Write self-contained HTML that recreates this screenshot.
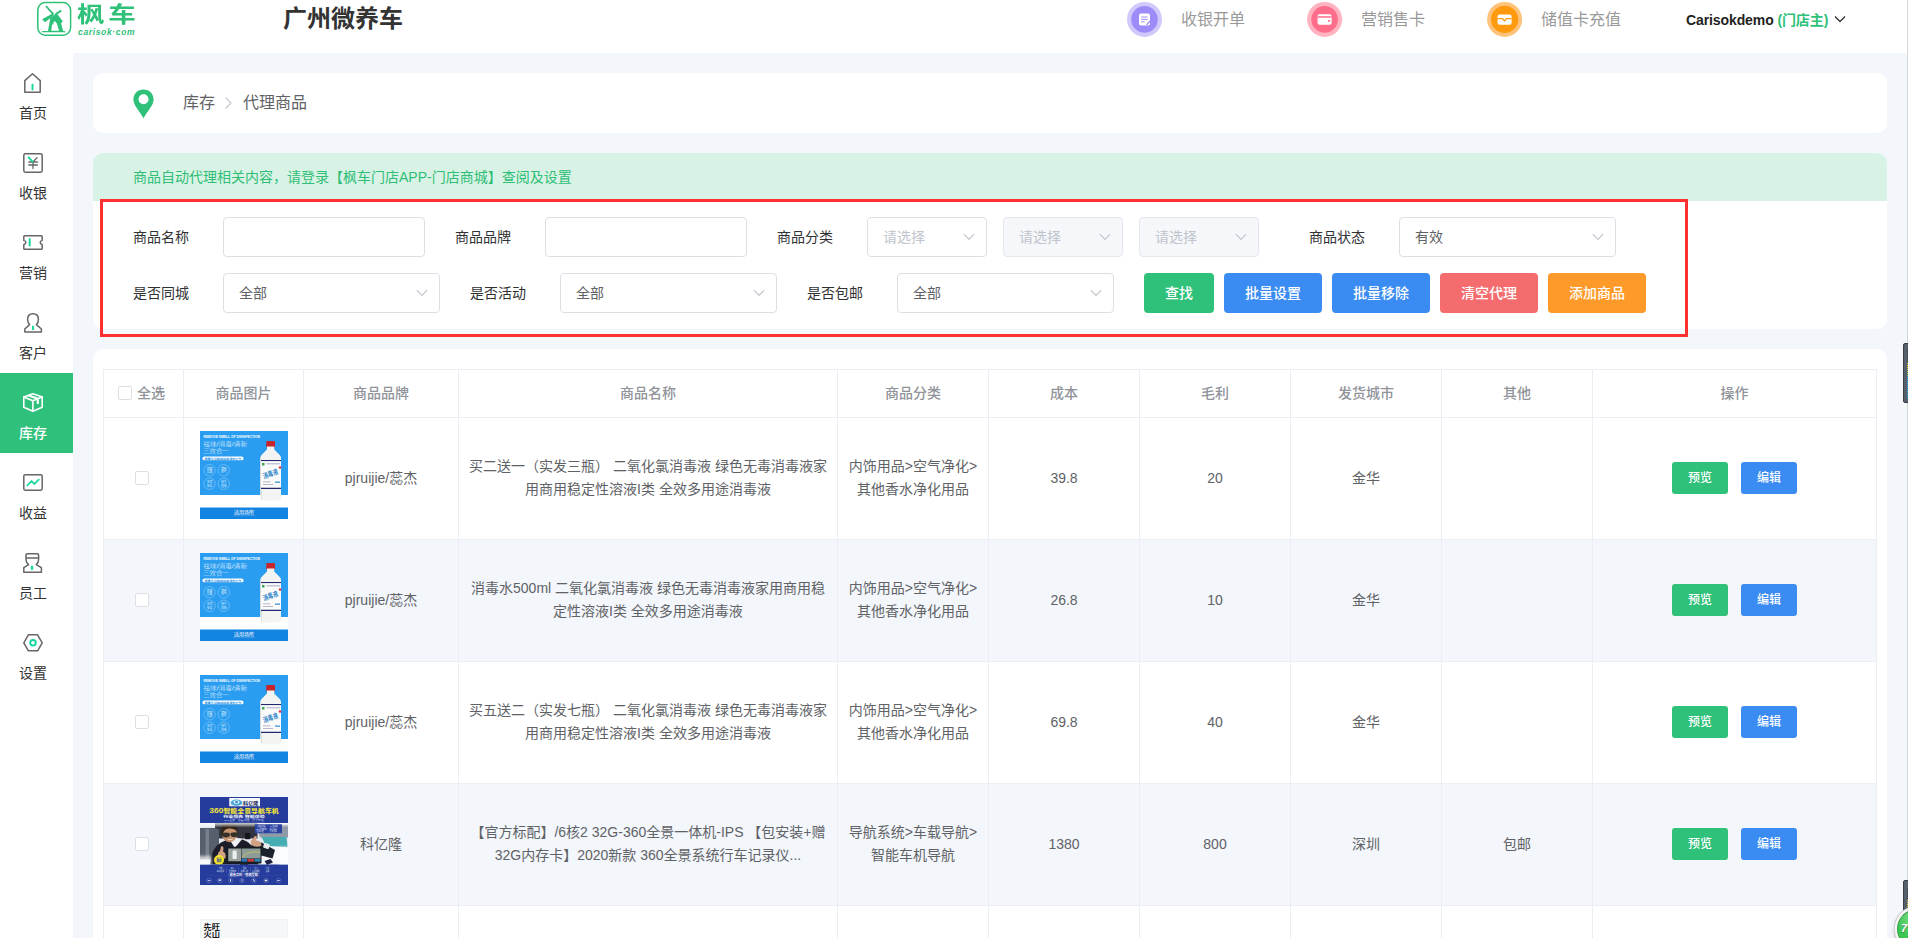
<!DOCTYPE html>
<html lang="zh-CN">
<head>
<meta charset="utf-8">
<title>代理商品</title>
<style>
*{box-sizing:border-box;margin:0;padding:0}
html,body{width:1908px;height:938px;overflow:hidden;background:#fff}
body{position:relative;font-family:"Liberation Sans","Noto Sans CJK SC",sans-serif;font-size:14px;color:#333;-webkit-font-smoothing:antialiased}
.abs{position:absolute}
/* header */
#hdr{position:absolute;left:0;top:0;width:1907px;height:53px;background:#fff}
#logo-t{position:absolute;left:77px;top:-2px;font-size:22px;font-weight:700;color:#2fc079;letter-spacing:3px;line-height:34px;white-space:nowrap;transform:scaleX(1.25);transform-origin:0 0}
#logo-s{position:absolute;left:78px;top:25px;font-size:8.5px;font-style:italic;color:#2fc079;letter-spacing:0.65px;line-height:14px;white-space:nowrap;font-weight:bold}
#title{position:absolute;left:283px;top:2px;font-size:24px;font-weight:bold;color:#333;line-height:34px;white-space:nowrap}
.hl{position:absolute;top:10px;font-size:16px;line-height:20px;color:#999;white-space:nowrap}
#user{position:absolute;left:1686px;top:10.5px;font-size:14px;line-height:18px;font-weight:bold;color:#222;white-space:nowrap;letter-spacing:-0.1px}
#user span{color:#2fc079}
/* sidebar */
#side{position:absolute;left:0;top:53px;width:73px;height:885px;background:#fff}
.si{position:absolute;left:0;width:73px;height:80px}
.si b{position:absolute;left:0;width:66px;top:50px;text-align:center;font-size:14px;line-height:20px;font-weight:normal;color:#333}
.si.on{background:#2fc17b}
.si.on b{color:#fff;font-weight:500}
/* main */
#main{position:absolute;left:73px;top:53px;width:1834px;height:885px;background:#f3f6fb}
.card{position:absolute;background:#fff;border-radius:10px}

/* breadcrumb */
#bc{left:20px;top:20px;width:1794px;height:60px}
#bc .t{position:absolute;top:20px;font-size:16px;line-height:20px;color:#606266;white-space:nowrap}
/* filter */
#fc{left:20px;top:100px;width:1794px;height:176px;overflow:hidden}
#tip{position:absolute;left:0;top:0;width:100%;height:48px;background:#d8f3e5;color:#2fbe77;font-size:14px;line-height:48px;padding-left:40px;white-space:nowrap}
#red{position:absolute;left:27px;top:146px;width:1588px;height:138px;border:3px solid #ff3030;pointer-events:none}
.lb{position:absolute;font-size:14px;line-height:20px;color:#303133;white-space:nowrap}
.r1{top:174px}.r2{top:230px}
.ip{position:absolute;height:40px;border:1px solid #dcdfe6;border-radius:4px;background:#fff;font-size:14px;line-height:38px;color:#606266;padding-left:15px;white-space:nowrap}
.ip.dis{background:#f5f7fa;border-color:#e4e7ed;color:#c0c4cc}
.ip.ph{color:#c0c4cc}
.i1{top:164px}.i2{top:220px}
.ip svg{position:absolute;right:10px;top:13px}
.bt{position:absolute;top:220px;height:40px;border-radius:4px;color:#fff;font-size:14px;font-weight:500;line-height:40px;text-align:center;white-space:nowrap}
.g{background:#2fc079}.b{background:#3b8cf2}.r{background:#f46c6d}.o{background:#fe9a2a}
/* table */
#tc{left:20px;top:296px;width:1794px;height:700px}

/* table: coordinates relative to #main (73,53) */
#tb{position:absolute;left:30px;top:316px;width:1774px;height:622px;border-left:1px solid #ebeef5;border-top:1px solid #ebeef5;overflow:hidden}
.c{position:absolute;border-right:1px solid #ebeef5;border-bottom:1px solid #ebeef5;display:flex;align-items:center;justify-content:center;text-align:center;font-size:14px;line-height:23px;color:#606266;white-space:nowrap}
.c.h{font-weight:500;color:#909399;height:48px;top:0}
.c.s{background:#f3f6fb}
.ck{position:absolute;width:14px;height:14px;border:1px solid #dcdfe6;border-radius:2px;background:#fff}
.ob{position:relative;top:-1px;display:inline-block;width:56px;height:32px;border-radius:3px;color:#fff;font-size:12px;font-weight:500;line-height:32px;text-align:center}
.ob+.ob{margin-left:13px}
.pi{position:absolute;left:16px;top:13px;width:88px;height:88px;display:block}

#edge{position:absolute;left:1907px;top:0;width:1px;height:938px;background:#d6d6d6}
.wd{position:absolute;left:1903px;width:8px;background:#56606c;border:1px solid #3a3d45;border-radius:2px}
.wd i{position:absolute;left:3px;width:3px}
#ball{position:absolute;left:1897px;top:909px;width:40px;height:40px;border-radius:50%;background:radial-gradient(circle at 50% 20%,#8be28f,#3cc552 60%);border:1px solid #2f9e44;box-shadow:0 0 0 2.5px #f4f4f4,0 0 0 3.2px #c4c4c4,-2px 2px 5px rgba(0,0,0,.25);color:#fff;font-size:11px;font-weight:bold;font-style:italic;line-height:37px;padding-left:3px;text-shadow:0 1px 1px rgba(0,0,0,.3)}
</style>
</head>
<body>
<div id="hdr">
<svg class="abs" style="left:35px;top:0" width="40" height="38" viewBox="0 0 40 38">
<rect x="2.8" y="2.6" width="32.8" height="32.6" rx="7.5" fill="none" stroke="#2fc079" stroke-width="1.5"/>
<g fill="#2fc079">
<path d="M7 31h22.5l1.6 1.3H7z"/>
<path d="M13 31l2.2-12.5 5.6-5 4.2 6.5 3.2 11z"/>
<path d="M10.2 6.6l1.4-1.1 7.6 8.2-1.4 1.3z"/>
<path d="M20.2 13.2l5.6-3.4 1 1.6-5.6 3.6z"/>
<path d="M7.2 19.2l10.4-5.6 1.2 2-8.8 6.6z"/>
<path d="M20.6 15.2l1.6-1.2 5.6 7.2-2 2.6z"/>
</g>
<path d="M16.2 30.8l1-7.2 2.6-2.6 2.2 2.8 2 7z" fill="#fff"/>
<rect x="17.2" y="22" width="1.3" height="2.4" fill="#2fc079"/>
</svg>
<div id="logo-t">枫车</div>
<div id="logo-s">carisok·com</div>
<div id="title">广州微养车</div>
<svg class="abs" style="left:1120px;top:0" width="410" height="40" viewBox="1120 0 410 40">
<circle cx="1144.5" cy="19.4" r="17.5" fill="#d2c8fb"/><circle cx="1144.5" cy="19.4" r="13.3" fill="#9d8cf8"/>
<rect x="1139" y="13.6" width="11" height="12" rx="1.8" fill="#fff"/>
<path d="M1141.2 17h6.4M1141.2 19.4h6.4M1141.2 21.8h3.4" stroke="#9d8cf8" stroke-width="1" fill="none"/>
<path d="M1146 24.4l3.6-3.8 1 .9-3.6 3.8z" fill="#9d8cf8"/>
<circle cx="1324.6" cy="19.4" r="17.5" fill="#ffb3c1"/><circle cx="1324.6" cy="19.4" r="13.3" fill="#ff6d8a"/>
<rect x="1317.6" y="14.2" width="14" height="10.6" rx="1.8" fill="#fff"/>
<rect x="1317.6" y="16.2" width="14" height="1.5" fill="#ff6d8a"/>
<rect x="1328" y="20" width="2" height="1.6" fill="#ff6d8a"/>
<circle cx="1504.6" cy="19.4" r="17.5" fill="#ffc27a"/><circle cx="1504.6" cy="19.4" r="13.6" fill="#ff9a0e"/>
<rect x="1497.6" y="14.4" width="14" height="10.4" rx="2" fill="#fff"/>
<path d="M1497.6 18.6h5l1.8 2.4 2-2.4h5.2" stroke="#ff9a0e" stroke-width="1.3" fill="none"/>
</svg>
<div class="hl" style="left:1181px">收银开单</div>
<div class="hl" style="left:1361px">营销售卡</div>
<div class="hl" style="left:1541px">储值卡充值</div>
<div id="user">Carisokdemo <span>(门店主)</span></div>
<svg class="abs" style="left:1833px;top:13px" width="14" height="12" viewBox="0 0 14 12"><path d="M2 3.5l5 5 5-5" fill="none" stroke="#333" stroke-width="1.3"/></svg>
</div>
<div id="side">
<div class="si" style="top:0"><b>首页</b></div>
<div class="si" style="top:80px"><b>收银</b></div>
<div class="si" style="top:160px"><b>营销</b></div>
<div class="si" style="top:240px"><b>客户</b></div>
<div class="si on" style="top:320px"><b>库存</b></div>
<div class="si" style="top:400px"><b>收益</b></div>
<div class="si" style="top:480px"><b>员工</b></div>
<div class="si" style="top:560px"><b>设置</b></div>
<svg class="abs" style="left:0;top:0" width="73" height="640" viewBox="0 53 73 640" fill="none" stroke="#666" stroke-width="1.5" stroke-linejoin="round" stroke-linecap="round">
<!-- home -->
<path d="M24.8 92.2V80.6L32.5 73.8L40.2 80.6V92.2Z"/>
<path d="M32.5 84.8V89.4" stroke="#1ed6a0" stroke-width="2"/>
<!-- cashier -->
<rect x="23.8" y="153.8" width="18.4" height="18.4" rx="1.6"/>
<path d="M33 162L37 157.6M33 162V168.4M28.8 162H37.4M28.8 165H37.4" stroke-width="1.3"/>
<path d="M28.6 157.4L32.6 161.6" stroke="#1ed6a0" stroke-width="2"/>
<!-- ticket -->
<path d="M23.8 236.6Q23.8 235.8 24.6 235.8H41.4Q42.2 235.8 42.2 236.6V240.4Q40.2 241 40.2 242.5Q40.2 244 42.2 244.6V248.4Q42.2 249.2 41.4 249.2H24.6Q23.8 249.2 23.8 248.4V244.6Q25.8 244 25.8 242.5Q25.8 241 23.8 240.4Z"/>
<path d="M29.7 239V245.6" stroke="#1ed6a0" stroke-width="2"/>
<!-- customer -->
<path d="M24.8 332V329L29.6 324.6Q27.6 322.4 27.6 319.4Q27.6 313.8 33 313.8Q38.4 313.8 38.4 319.4Q38.4 322.4 36.4 324.6L41.4 329V332Z"/>
<path d="M33 325.8V330" stroke="#1ed6a0" stroke-width="2.2" stroke-linecap="butt"/>
<!-- box (active) -->
<g stroke="#fff" stroke-width="1.6">
<path d="M23.8 396.9L32.9 393.7L42.2 396.9V407.2L32.9 411.2L23.8 407.2Z"/>
<path d="M23.8 396.9L32.9 400.8L42.2 396.9M32.9 400.8V411.2"/>
<path d="M28.2 395.2L37.8 398.8V404" stroke-width="2.2" stroke-linecap="butt"/>
</g>
<!-- revenue -->
<rect x="23.8" y="474.8" width="18.4" height="15.4" rx="1.4"/>
<path d="M27.4 485.4L31.6 481L34.2 484L38.8 479.6" stroke="#1ed6a0" stroke-width="1.8"/>
<!-- staff -->
<path d="M23.8 572.2V567.6L28.6 564.6Q26 562.6 26 559.4V555Q26 553.8 27.2 553.8H37.4Q38.6 553.8 38.6 555V559.4Q38.6 562.6 36.2 564.6L41.4 567.6V572.2Z"/>
<path d="M26.4 558H38.4"/>
<path d="M32 565.8V569.8" stroke="#1ed6a0" stroke-width="2.4" stroke-linecap="butt"/>
<!-- settings -->
<path d="M23.8 642.8L28.4 634.8H37.6L42.2 642.8L37.6 650.8H28.4Z"/>
<circle cx="33" cy="642.8" r="2.8" stroke="#1ed6a0" stroke-width="2"/>
</svg>
</div>
<div id="main">
<div class="card" id="bc">
<svg class="abs" style="left:38px;top:14.5px" width="26" height="32" viewBox="0 0 26 32"><path d="M12.5 1.6C6.8 1.6 2.4 5.8 2.4 11.4C2.4 17.6 9.4 23.8 12.5 30.2C15.6 23.8 22.6 17.6 22.6 11.4C22.6 5.8 18.2 1.6 12.5 1.6Z" fill="#2fc079"/><circle cx="12.5" cy="11.2" r="5" fill="#fff"/></svg>
<div class="t" style="left:90px">库存</div>
<svg class="abs" style="left:129px;top:23px" width="12" height="14" viewBox="0 0 12 14"><path d="M3.5 1.5L9 7L3.5 12.5" fill="none" stroke="#c0c4cc" stroke-width="1.1"/></svg>
<div class="t" style="left:150px">代理商品</div>
</div>
<div class="card" id="fc"><div id="tip">商品自动代理相关内容，请登录【枫车门店APP-门店商城】查阅及设置</div></div>
<div class="lb r1" style="left:60px">商品名称</div>
<div class="ip i1 " style="left:150px;width:202px"></div>
<div class="lb r1" style="left:382px">商品品牌</div>
<div class="ip i1 " style="left:472px;width:202px"></div>
<div class="lb r1" style="left:704px">商品分类</div>
<div class="ip i1 ph" style="left:794px;width:120px">请选择<svg width="14" height="12" viewBox="0 0 14 12"><path d="M1.8 3.2L7 8.4L12.2 3.2" fill="none" stroke="#c0c4cc" stroke-width="1.2"/></svg></div>
<div class="ip i1 dis" style="left:930px;width:120px">请选择<svg width="14" height="12" viewBox="0 0 14 12"><path d="M1.8 3.2L7 8.4L12.2 3.2" fill="none" stroke="#c0c4cc" stroke-width="1.2"/></svg></div>
<div class="ip i1 dis" style="left:1066px;width:120px">请选择<svg width="14" height="12" viewBox="0 0 14 12"><path d="M1.8 3.2L7 8.4L12.2 3.2" fill="none" stroke="#c0c4cc" stroke-width="1.2"/></svg></div>
<div class="lb r1" style="left:1236px">商品状态</div>
<div class="ip i1 " style="left:1326px;width:217px">有效<svg width="14" height="12" viewBox="0 0 14 12"><path d="M1.8 3.2L7 8.4L12.2 3.2" fill="none" stroke="#c0c4cc" stroke-width="1.2"/></svg></div>
<div class="lb r2" style="left:60px">是否同城</div>
<div class="ip i2 " style="left:150px;width:217px">全部<svg width="14" height="12" viewBox="0 0 14 12"><path d="M1.8 3.2L7 8.4L12.2 3.2" fill="none" stroke="#c0c4cc" stroke-width="1.2"/></svg></div>
<div class="lb r2" style="left:397px">是否活动</div>
<div class="ip i2 " style="left:487px;width:217px">全部<svg width="14" height="12" viewBox="0 0 14 12"><path d="M1.8 3.2L7 8.4L12.2 3.2" fill="none" stroke="#c0c4cc" stroke-width="1.2"/></svg></div>
<div class="lb r2" style="left:734px">是否包邮</div>
<div class="ip i2 " style="left:824px;width:217px">全部<svg width="14" height="12" viewBox="0 0 14 12"><path d="M1.8 3.2L7 8.4L12.2 3.2" fill="none" stroke="#c0c4cc" stroke-width="1.2"/></svg></div>
<div class="bt g" style="left:1071px;width:70px">查找</div>
<div class="bt b" style="left:1151px;width:98px">批量设置</div>
<div class="bt b" style="left:1259px;width:98px">批量移除</div>
<div class="bt r" style="left:1367px;width:98px">清空代理</div>
<div class="bt o" style="left:1475px;width:98px">添加商品</div>
<div id="red"></div>
<div class="card" id="tc"></div>
<!--TB--><div id="tb">
<div class="c h" style="left:0px;width:80px"><span class="ck" style="left:14px;top:16px"></span><span style="position:absolute;left:33px;top:12px">全选</span></div>
<div class="c h" style="left:80px;width:120px">商品图片</div>
<div class="c h" style="left:200px;width:155px">商品品牌</div>
<div class="c h" style="left:355px;width:379px">商品名称</div>
<div class="c h" style="left:734px;width:151px">商品分类</div>
<div class="c h" style="left:885px;width:151px">成本</div>
<div class="c h" style="left:1036px;width:151px">毛利</div>
<div class="c h" style="left:1187px;width:151px">发货城市</div>
<div class="c h" style="left:1338px;width:151px">其他</div>
<div class="c h" style="left:1489px;width:284px">操作</div>
<div class="c" style="left:0px;top:48px;width:80px;height:122px"><span class="ck" style="left:31px;top:53px"></span></div>
<div class="c" style="left:80px;top:48px;width:120px;height:122px"><svg class="pi" viewBox="0 0 352 352" font-family="Liberation Sans, Noto Sans CJK SC, sans-serif">
<rect width="352" height="258" fill="#2a9df0"/>
<rect y="256" width="352" height="50" fill="#fff"/>
<rect y="306" width="352" height="46" fill="#1484e2"/>
<text x="14" y="27" font-size="13.5" font-weight="bold" fill="#fff" textLength="226" lengthAdjust="spacingAndGlyphs">REMOVE SMELL OF DISINFECTION</text>
<text x="13" y="60" font-size="22" font-weight="300" fill="#eaf5fe" textLength="176" lengthAdjust="spacingAndGlyphs">祛味/消毒/清新</text>
<text x="13" y="88" font-size="22" font-weight="300" fill="#eaf5fe" textLength="102" lengthAdjust="spacingAndGlyphs">三效合一</text>
<rect x="10" y="102" width="164" height="15" rx="7.5" fill="#fff"/>
<text x="18" y="114" font-size="11" font-weight="bold" fill="#2a8fe0" textLength="148" lengthAdjust="spacingAndGlyphs">健康生活除味祛味清新空气</text>
<g fill="none" stroke="#bfe0fa" stroke-width="1.6"><circle cx="38" cy="157" r="23"/><circle cx="95" cy="157" r="23"/><circle cx="38" cy="211" r="23"/><circle cx="95" cy="211" r="23"/></g>
<g font-size="11.5" fill="#d6ecfc" text-anchor="middle">
<text x="38" y="154">除菌</text><text x="38" y="168">抗菌</text>
<text x="95" y="154">清新</text><text x="95" y="168">空气</text>
<text x="38" y="208">天然</text><text x="38" y="222">安全</text>
<text x="95" y="208">持久</text><text x="95" y="222">祛味</text>
</g>
<rect x="265" y="40" width="35" height="26" rx="4" fill="#c8242b"/>
<path d="M268 62h29v12l22 22q5 5 5 12v158q0 12-12 12h-59q-12 0-12-12V108q0-7 5-12l22-22z" fill="#f4f4f2"/>
<path d="M244 112q0 160 4 162" stroke="#dcdcd8" stroke-width="5" fill="none"/>
<rect x="244" y="116" width="80" height="5" fill="#23286e"/>
<rect x="244" y="226" width="80" height="6" fill="#23286e"/>
<rect x="244" y="121" width="80" height="105" fill="#fbfbfb"/>
<rect x="248" y="128" width="10" height="10" fill="#3da352"/>
<rect x="266" y="130" width="54" height="3" fill="#8a8fb0"/>
<circle cx="320" cy="146" r="5" fill="#e0343c"/>
<text transform="translate(256 192) rotate(-20)" font-size="29" font-weight="bold" fill="#2f86c8" textLength="62" lengthAdjust="spacingAndGlyphs">消毒液</text>
<rect x="252" y="202" width="30" height="3" fill="#9aa0b8"/><rect x="300" y="202" width="20" height="5" fill="#3b8fd0"/>
<rect x="252" y="212" width="40" height="3" fill="#9aa0b8"/>
<text x="176" y="331" font-size="19" fill="#fff" text-anchor="middle" textLength="80" lengthAdjust="spacingAndGlyphs">适用场所</text>
<rect x="132" y="338" width="90" height="2.5" fill="#4a9fe6"/>
</svg></div>
<div class="c" style="left:200px;top:48px;width:155px;height:122px">pjruijie/蕊杰</div>
<div class="c" style="left:355px;top:48px;width:379px;height:122px;padding-bottom:2px">买二送一（实发三瓶） 二氧化氯消毒液 绿色无毒消毒液家<br>用商用稳定性溶液I类 全效多用途消毒液</div>
<div class="c" style="left:734px;top:48px;width:151px;height:122px;padding-bottom:2px">内饰用品&gt;空气净化&gt;<br>其他香水净化用品</div>
<div class="c" style="left:885px;top:48px;width:151px;height:122px">39.8</div>
<div class="c" style="left:1036px;top:48px;width:151px;height:122px">20</div>
<div class="c" style="left:1187px;top:48px;width:151px;height:122px">金华</div>
<div class="c" style="left:1338px;top:48px;width:151px;height:122px"></div>
<div class="c" style="left:1489px;top:48px;width:284px;height:122px"><span class="ob g">预览</span><span class="ob b">编辑</span></div>
<div class="c s" style="left:0px;top:170px;width:80px;height:122px"><span class="ck" style="left:31px;top:53px"></span></div>
<div class="c s" style="left:80px;top:170px;width:120px;height:122px"><svg class="pi" viewBox="0 0 352 352" font-family="Liberation Sans, Noto Sans CJK SC, sans-serif">
<rect width="352" height="258" fill="#2a9df0"/>
<rect y="256" width="352" height="50" fill="#fff"/>
<rect y="306" width="352" height="46" fill="#1484e2"/>
<text x="14" y="27" font-size="13.5" font-weight="bold" fill="#fff" textLength="226" lengthAdjust="spacingAndGlyphs">REMOVE SMELL OF DISINFECTION</text>
<text x="13" y="60" font-size="22" font-weight="300" fill="#eaf5fe" textLength="176" lengthAdjust="spacingAndGlyphs">祛味/消毒/清新</text>
<text x="13" y="88" font-size="22" font-weight="300" fill="#eaf5fe" textLength="102" lengthAdjust="spacingAndGlyphs">三效合一</text>
<rect x="10" y="102" width="164" height="15" rx="7.5" fill="#fff"/>
<text x="18" y="114" font-size="11" font-weight="bold" fill="#2a8fe0" textLength="148" lengthAdjust="spacingAndGlyphs">健康生活除味祛味清新空气</text>
<g fill="none" stroke="#bfe0fa" stroke-width="1.6"><circle cx="38" cy="157" r="23"/><circle cx="95" cy="157" r="23"/><circle cx="38" cy="211" r="23"/><circle cx="95" cy="211" r="23"/></g>
<g font-size="11.5" fill="#d6ecfc" text-anchor="middle">
<text x="38" y="154">除菌</text><text x="38" y="168">抗菌</text>
<text x="95" y="154">清新</text><text x="95" y="168">空气</text>
<text x="38" y="208">天然</text><text x="38" y="222">安全</text>
<text x="95" y="208">持久</text><text x="95" y="222">祛味</text>
</g>
<rect x="265" y="40" width="35" height="26" rx="4" fill="#c8242b"/>
<path d="M268 62h29v12l22 22q5 5 5 12v158q0 12-12 12h-59q-12 0-12-12V108q0-7 5-12l22-22z" fill="#f4f4f2"/>
<path d="M244 112q0 160 4 162" stroke="#dcdcd8" stroke-width="5" fill="none"/>
<rect x="244" y="116" width="80" height="5" fill="#23286e"/>
<rect x="244" y="226" width="80" height="6" fill="#23286e"/>
<rect x="244" y="121" width="80" height="105" fill="#fbfbfb"/>
<rect x="248" y="128" width="10" height="10" fill="#3da352"/>
<rect x="266" y="130" width="54" height="3" fill="#8a8fb0"/>
<circle cx="320" cy="146" r="5" fill="#e0343c"/>
<text transform="translate(256 192) rotate(-20)" font-size="29" font-weight="bold" fill="#2f86c8" textLength="62" lengthAdjust="spacingAndGlyphs">消毒液</text>
<rect x="252" y="202" width="30" height="3" fill="#9aa0b8"/><rect x="300" y="202" width="20" height="5" fill="#3b8fd0"/>
<rect x="252" y="212" width="40" height="3" fill="#9aa0b8"/>
<text x="176" y="331" font-size="19" fill="#fff" text-anchor="middle" textLength="80" lengthAdjust="spacingAndGlyphs">适用场所</text>
<rect x="132" y="338" width="90" height="2.5" fill="#4a9fe6"/>
</svg></div>
<div class="c s" style="left:200px;top:170px;width:155px;height:122px">pjruijie/蕊杰</div>
<div class="c s" style="left:355px;top:170px;width:379px;height:122px;padding-bottom:2px">消毒水500ml 二氧化氯消毒液 绿色无毒消毒液家用商用稳<br>定性溶液I类 全效多用途消毒液</div>
<div class="c s" style="left:734px;top:170px;width:151px;height:122px;padding-bottom:2px">内饰用品&gt;空气净化&gt;<br>其他香水净化用品</div>
<div class="c s" style="left:885px;top:170px;width:151px;height:122px">26.8</div>
<div class="c s" style="left:1036px;top:170px;width:151px;height:122px">10</div>
<div class="c s" style="left:1187px;top:170px;width:151px;height:122px">金华</div>
<div class="c s" style="left:1338px;top:170px;width:151px;height:122px"></div>
<div class="c s" style="left:1489px;top:170px;width:284px;height:122px"><span class="ob g">预览</span><span class="ob b">编辑</span></div>
<div class="c" style="left:0px;top:292px;width:80px;height:122px"><span class="ck" style="left:31px;top:53px"></span></div>
<div class="c" style="left:80px;top:292px;width:120px;height:122px"><svg class="pi" viewBox="0 0 352 352" font-family="Liberation Sans, Noto Sans CJK SC, sans-serif">
<rect width="352" height="258" fill="#2a9df0"/>
<rect y="256" width="352" height="50" fill="#fff"/>
<rect y="306" width="352" height="46" fill="#1484e2"/>
<text x="14" y="27" font-size="13.5" font-weight="bold" fill="#fff" textLength="226" lengthAdjust="spacingAndGlyphs">REMOVE SMELL OF DISINFECTION</text>
<text x="13" y="60" font-size="22" font-weight="300" fill="#eaf5fe" textLength="176" lengthAdjust="spacingAndGlyphs">祛味/消毒/清新</text>
<text x="13" y="88" font-size="22" font-weight="300" fill="#eaf5fe" textLength="102" lengthAdjust="spacingAndGlyphs">三效合一</text>
<rect x="10" y="102" width="164" height="15" rx="7.5" fill="#fff"/>
<text x="18" y="114" font-size="11" font-weight="bold" fill="#2a8fe0" textLength="148" lengthAdjust="spacingAndGlyphs">健康生活除味祛味清新空气</text>
<g fill="none" stroke="#bfe0fa" stroke-width="1.6"><circle cx="38" cy="157" r="23"/><circle cx="95" cy="157" r="23"/><circle cx="38" cy="211" r="23"/><circle cx="95" cy="211" r="23"/></g>
<g font-size="11.5" fill="#d6ecfc" text-anchor="middle">
<text x="38" y="154">除菌</text><text x="38" y="168">抗菌</text>
<text x="95" y="154">清新</text><text x="95" y="168">空气</text>
<text x="38" y="208">天然</text><text x="38" y="222">安全</text>
<text x="95" y="208">持久</text><text x="95" y="222">祛味</text>
</g>
<rect x="265" y="40" width="35" height="26" rx="4" fill="#c8242b"/>
<path d="M268 62h29v12l22 22q5 5 5 12v158q0 12-12 12h-59q-12 0-12-12V108q0-7 5-12l22-22z" fill="#f4f4f2"/>
<path d="M244 112q0 160 4 162" stroke="#dcdcd8" stroke-width="5" fill="none"/>
<rect x="244" y="116" width="80" height="5" fill="#23286e"/>
<rect x="244" y="226" width="80" height="6" fill="#23286e"/>
<rect x="244" y="121" width="80" height="105" fill="#fbfbfb"/>
<rect x="248" y="128" width="10" height="10" fill="#3da352"/>
<rect x="266" y="130" width="54" height="3" fill="#8a8fb0"/>
<circle cx="320" cy="146" r="5" fill="#e0343c"/>
<text transform="translate(256 192) rotate(-20)" font-size="29" font-weight="bold" fill="#2f86c8" textLength="62" lengthAdjust="spacingAndGlyphs">消毒液</text>
<rect x="252" y="202" width="30" height="3" fill="#9aa0b8"/><rect x="300" y="202" width="20" height="5" fill="#3b8fd0"/>
<rect x="252" y="212" width="40" height="3" fill="#9aa0b8"/>
<text x="176" y="331" font-size="19" fill="#fff" text-anchor="middle" textLength="80" lengthAdjust="spacingAndGlyphs">适用场所</text>
<rect x="132" y="338" width="90" height="2.5" fill="#4a9fe6"/>
</svg></div>
<div class="c" style="left:200px;top:292px;width:155px;height:122px">pjruijie/蕊杰</div>
<div class="c" style="left:355px;top:292px;width:379px;height:122px;padding-bottom:2px">买五送二（实发七瓶） 二氧化氯消毒液 绿色无毒消毒液家<br>用商用稳定性溶液I类 全效多用途消毒液</div>
<div class="c" style="left:734px;top:292px;width:151px;height:122px;padding-bottom:2px">内饰用品&gt;空气净化&gt;<br>其他香水净化用品</div>
<div class="c" style="left:885px;top:292px;width:151px;height:122px">69.8</div>
<div class="c" style="left:1036px;top:292px;width:151px;height:122px">40</div>
<div class="c" style="left:1187px;top:292px;width:151px;height:122px">金华</div>
<div class="c" style="left:1338px;top:292px;width:151px;height:122px"></div>
<div class="c" style="left:1489px;top:292px;width:284px;height:122px"><span class="ob g">预览</span><span class="ob b">编辑</span></div>
<div class="c s" style="left:0px;top:414px;width:80px;height:122px"><span class="ck" style="left:31px;top:53px"></span></div>
<div class="c s" style="left:80px;top:414px;width:120px;height:122px"><svg class="pi" viewBox="0 0 352 352" font-family="Liberation Sans, Noto Sans CJK SC, sans-serif">
<defs>
<filter id="bl" x="-5%" y="-5%" width="110%" height="110%"><feGaussianBlur stdDeviation="1.6"/></filter>
<filter id="bl2" x="-20%" y="-20%" width="140%" height="140%"><feGaussianBlur stdDeviation="7"/></filter>
<clipPath id="pc"><rect x="0" y="104" width="352" height="166"/></clipPath>
</defs>
<rect width="352" height="352" fill="#263c9c"/>
<g clip-path="url(#pc)"><g filter="url(#bl)">
<rect x="-10" y="100" width="372" height="176" fill="#e6eaf0"/>
<rect x="60" y="104" width="170" height="62" fill="#30353e"/>
<path d="M-4 124h66l14 6v120H-4z" fill="#56606c"/>
<path d="M22 128h14v118H22z" fill="#77818d"/>
<path d="M225 110h130v52H240z" fill="#8f9aa6"/>
<path d="M246 160h100l4 40-86-4z" fill="#45adb2"/>
<path d="M262 197l92 4v66h-120z" fill="#f6f8fa"/>
<path d="M40 270q4-66 44-88l30-14 40-2q40 6 60 40l20 64z" fill="#1b1f2a"/>
<path d="M196 196l50-14 54 30-10 34-60-16z" fill="#1d212c"/>
<path d="M117 168l22 36 30-36-26-6z" fill="#eef0f3"/>
<ellipse cx="118" cy="148" rx="30" ry="33" fill="#c7946f"/>
<path d="M84 152q-6-44 30-46q40-2 36 34q-12-16-36-14q-22 2-24 30z" fill="#33261f"/>
<path d="M88 144q16-5 30 0l2 10q-4 8-15 8q-13 0-17-8zM122 144q16-5 30-1l-1 10q-5 8-15 8q-11 0-14-8z" fill="#35332b"/>
<path d="M106 166q14 6 30-1q-12 14-30 1z" fill="#f3efea"/>
<rect x="180" y="144" width="21" height="25" rx="3" fill="#15171c"/>
<path d="M72 244q-4-22 8-28l4-18q10-4 10 8l-2 12q14 6 10 26q-16 12-30 0z" fill="#d1a182"/>
<path d="M204 190q-4-16 6-22l10-12q10-2 6 10l-4 8q22 0 24 20q-20 14-42-4z" fill="#d1a182"/>
<rect x="254" y="186" width="24" height="20" rx="4" fill="#e9ecef" transform="rotate(20 266 196)"/>
<rect x="107" y="199" width="139" height="67" rx="4" fill="#171a20"/>
<rect x="113" y="206" width="51" height="51" fill="#9aa39f"/><rect x="130" y="214" width="17" height="34" rx="5" fill="#eceeef"/>
<rect x="166" y="206" width="76" height="40" fill="#8c9c98"/><path d="M168 240q30-28 72-18" stroke="#e6cf45" stroke-width="2.4" fill="none"/>
<rect x="166" y="248" width="22" height="11" fill="#2a74bc"/><rect x="190" y="248" width="26" height="11" fill="#c53b3b"/><rect x="218" y="248" width="24" height="11" fill="#2c83b6"/>
<rect x="160" y="265" width="33" height="8" fill="#22252c"/>
<path d="M258 256l24-8 10 14-24 10z" fill="#1c2440"/>
<circle cx="76" cy="252" r="20" fill="#f2e32b"/>
</g>
<rect x="-20" y="88" width="392" height="26" fill="#fff" opacity=".75" filter="url(#bl2)"/>
<rect x="-24" y="236" width="70" height="46" fill="#fff" opacity=".7" filter="url(#bl2)"/>
<rect x="318" y="200" width="60" height="80" fill="#fff" opacity=".7" filter="url(#bl2)"/>
</g>
<text x="76" y="250" font-size="10" font-weight="bold" fill="#263c9c" text-anchor="middle">现货</text><text x="76" y="261" font-size="10" font-weight="bold" fill="#263c9c" text-anchor="middle">速发</text>
<rect x="219" y="109" width="109" height="36" rx="2" fill="#2a42a2"/>
<g font-size="7" fill="#e8ebfa"><text x="224" y="120">·六核处理器</text><text x="277" y="120">·4G全网通</text><text x="224" y="130">·360全景影像</text><text x="277" y="130">·高清夜视</text><text x="224" y="140">·语音声控</text><text x="277" y="140">·行车记录</text></g>
<rect x="117" y="4" width="123" height="33" fill="#f6f8fa"/>
<ellipse cx="146" cy="22" rx="23" ry="12" fill="#45a6dd"/><ellipse cx="146" cy="20" rx="12" ry="7" fill="#eaf5fb"/><ellipse cx="146" cy="20" rx="6" ry="4" fill="#2b7fc0"/>
<path d="M122 30q30 10 60-8" stroke="#45a6dd" stroke-width="2" fill="none"/>
<text x="172" y="30" font-size="19" font-weight="bold" fill="#1d2a5a" textLength="62" lengthAdjust="spacingAndGlyphs">科亿隆</text>
<text x="176" y="63" font-size="22" font-weight="900" fill="#f1e33a" text-anchor="middle" textLength="278" lengthAdjust="spacingAndGlyphs"><tspan font-size="27">360</tspan>智能全景导航车机</text>
<text x="176" y="82" font-size="15" font-weight="bold" fill="#fff" text-anchor="middle" textLength="166" lengthAdjust="spacingAndGlyphs">行业领先 智能体验</text>
<text x="176" y="97" font-size="9.5" fill="#c3cbee" text-anchor="middle" textLength="158" lengthAdjust="spacingAndGlyphs">360全景 · 语音声控 · 蓝牙电话</text>
<rect x="96" y="100.5" width="164" height="1" fill="#8d97d8"/>
<g font-size="7.5" fill="#dfe3f8" text-anchor="middle"><text x="82" y="289">六核</text><text x="82" y="299">高速处理</text><text x="130" y="289">高清</text><text x="130" y="299">全景影像</text><text x="178" y="289">语音</text><text x="178" y="299">智能声控</text><text x="224" y="289">蓝牙</text><text x="224" y="299">免提通话</text><text x="270" y="289">行车</text><text x="270" y="299">记录</text></g>
<g fill="#8d97d8"><rect x="105" y="282" width="1" height="20"/><rect x="153" y="282" width="1" height="20"/><rect x="200" y="282" width="1" height="20"/></g>
<rect x="112" y="306" width="126" height="14" rx="2" fill="#30439f" stroke="#6572c4" stroke-width="0.8"/>
<text x="175" y="317" font-size="11.5" font-weight="bold" fill="#fff" text-anchor="middle" textLength="114" lengthAdjust="spacingAndGlyphs">语音声控 · 智能互联</text>
<rect x="24" y="313" width="82" height="1" fill="#4f5db6"/><rect x="244" y="313" width="84" height="1" fill="#4f5db6"/>
<g fill="none" stroke="#97a1e0" stroke-width="1.3"><circle cx="36" cy="334" r="9"/><circle cx="79" cy="334" r="9"/><circle cx="122" cy="334" r="9"/><circle cx="168" cy="334" r="9"/><circle cx="215" cy="334" r="9"/><circle cx="264" cy="334" r="9"/><circle cx="314" cy="334" r="9"/></g>
<g fill="#e8ebfa"><rect x="31" y="332" width="10" height="3"/><rect x="74" y="330" width="10" height="5"/><rect x="120" y="329" width="4" height="9"/><rect x="166.500" y="329" width="3" height="9"/><path d="M211 330l3-2 6 9-3 2z"/><rect x="259" y="331" width="10" height="6"/><rect x="310" y="332" width="8" height="4"/></g>
</svg></div>
<div class="c s" style="left:200px;top:414px;width:155px;height:122px">科亿隆</div>
<div class="c s" style="left:355px;top:414px;width:379px;height:122px;padding-bottom:2px">【官方标配】/6核2 32G-360全景一体机-IPS 【包安装+赠<br>32G内存卡】2020新款 360全景系统行车记录仪...</div>
<div class="c s" style="left:734px;top:414px;width:151px;height:122px;padding-bottom:2px">导航系统&gt;车载导航&gt;<br>智能车机导航</div>
<div class="c s" style="left:885px;top:414px;width:151px;height:122px">1380</div>
<div class="c s" style="left:1036px;top:414px;width:151px;height:122px">800</div>
<div class="c s" style="left:1187px;top:414px;width:151px;height:122px">深圳</div>
<div class="c s" style="left:1338px;top:414px;width:151px;height:122px">包邮</div>
<div class="c s" style="left:1489px;top:414px;width:284px;height:122px"><span class="ob g">预览</span><span class="ob b">编辑</span></div>
<div class="c" style="left:0px;top:536px;width:80px;height:122px"><span class="ck" style="left:31px;top:53px"></span></div>
<div class="c" style="left:80px;top:536px;width:120px;height:122px"><svg class="pi" viewBox="0 0 352 352" font-family="Liberation Sans, Noto Sans CJK SC, sans-serif">
<rect width="352" height="352" fill="#f4f8f8"/><rect x="1" y="1" width="350" height="350" fill="none" stroke="#e9eef0" stroke-width="2.5"/>
<text x="14" y="42" font-size="30" font-weight="bold" fill="#1a1a1a" textLength="66" lengthAdjust="spacingAndGlyphs">先旺</text>
<text x="14" y="73" font-size="30" font-weight="bold" fill="#1a1a1a" textLength="66" lengthAdjust="spacingAndGlyphs">火山</text>
</svg></div>
<div class="c" style="left:200px;top:536px;width:155px;height:122px"></div>
<div class="c" style="left:355px;top:536px;width:379px;height:122px"></div>
<div class="c" style="left:734px;top:536px;width:151px;height:122px"></div>
<div class="c" style="left:885px;top:536px;width:151px;height:122px"></div>
<div class="c" style="left:1036px;top:536px;width:151px;height:122px"></div>
<div class="c" style="left:1187px;top:536px;width:151px;height:122px"></div>
<div class="c" style="left:1338px;top:536px;width:151px;height:122px"></div>
<div class="c" style="left:1489px;top:536px;width:284px;height:122px"></div>
</div><!--/TB-->
</div>
<div id="edge"></div>
<div class="wd" style="top:343px;height:60px"><i style="top:5px;height:14px;background:repeating-linear-gradient(#3b3c4c 0 1.2px,transparent 1.2px 2px)"></i><i style="top:19px;height:8px;background:repeating-linear-gradient(#f2c81e 0 1.2px,transparent 1.2px 2px)"></i><i style="top:27px;height:6px;background:repeating-linear-gradient(#7fd05a 0 1.2px,transparent 1.2px 2px)"></i><i style="top:33px;height:22px;background:repeating-linear-gradient(#28b4f0 0 1.2px,transparent 1.2px 2px)"></i></div>
<div class="wd" style="top:880px;height:60px"><i style="top:7px;height:12px;background:repeating-linear-gradient(#3b3c4c 0 1.2px,transparent 1.2px 2px)"></i><i style="top:19px;height:8px;background:repeating-linear-gradient(#f2c81e 0 1.2px,transparent 1.2px 2px)"></i></div>
<div id="ball">77</div>
</body>
</html>
